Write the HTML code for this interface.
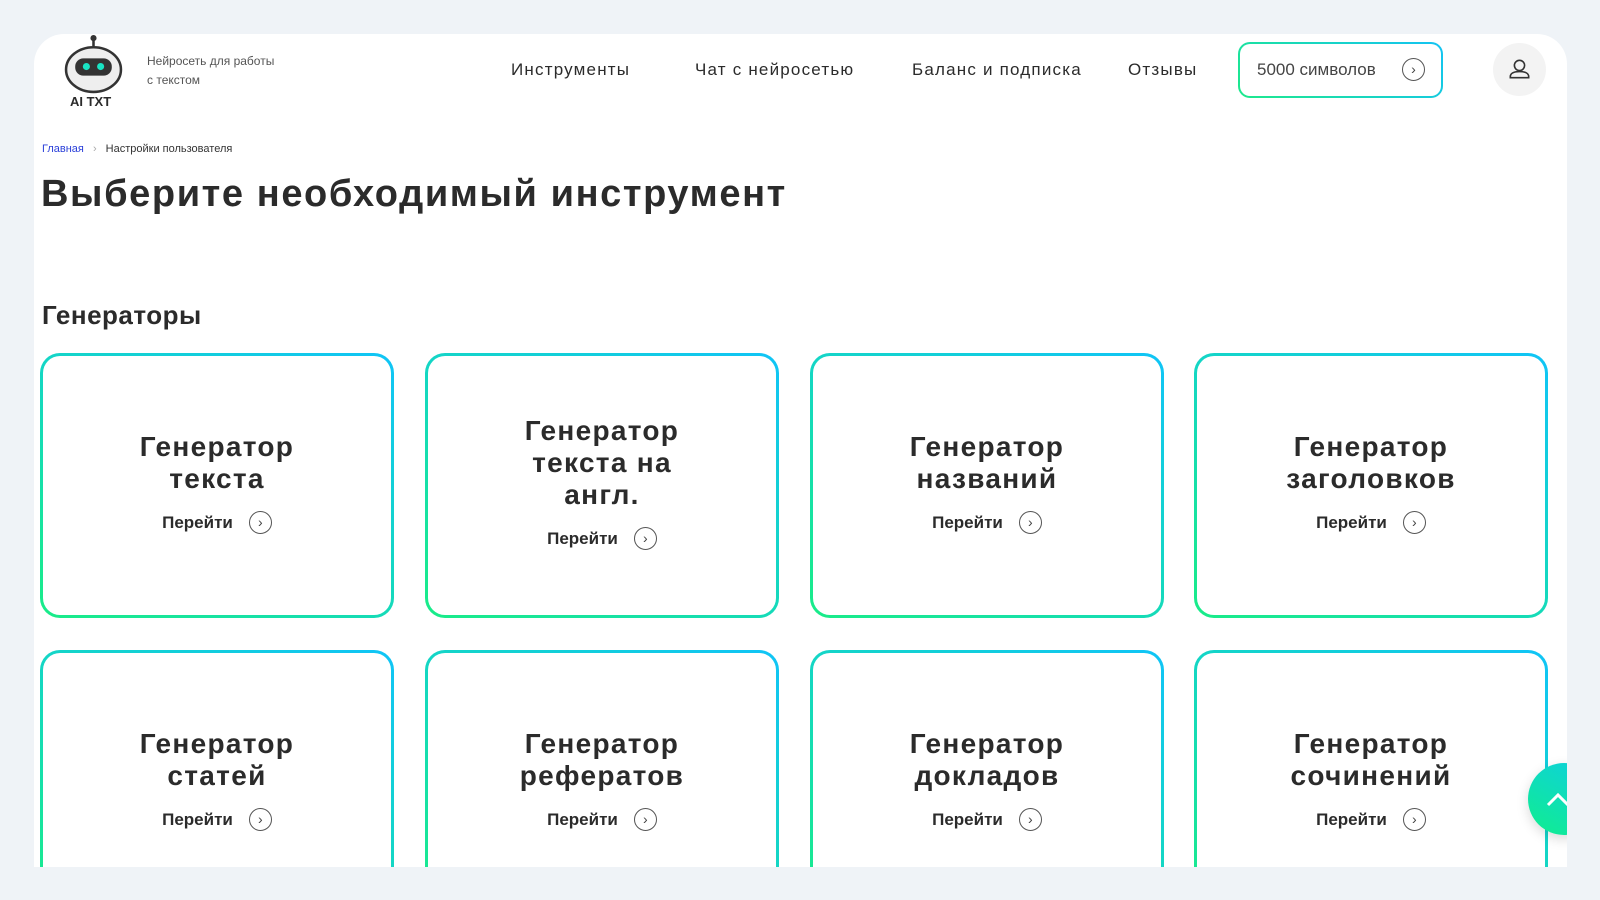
<!DOCTYPE html>
<html><head><meta charset="utf-8"><style>
*{box-sizing:border-box;margin:0;padding:0}
body{width:1600px;height:900px;background:#eff3f7;font-family:"Liberation Sans",sans-serif;color:#2b2b2b;overflow:hidden;position:relative}
.panel{position:absolute;left:34px;top:34px;width:1533px;height:833px;background:#fff;border-radius:30px 30px 0 0;overflow:hidden}
.nav a{position:absolute;top:60px;font-size:17px;letter-spacing:1.2px;color:#2b2b2b;text-decoration:none}
.btn{position:absolute;left:1238px;top:42px;width:205px;height:56px;border-radius:12px;border:2px solid transparent;background:linear-gradient(#fff,#fff) padding-box,linear-gradient(45deg,#1de98b,#13c3f4) border-box;font-size:17px;color:#444}
.circ{display:inline-block;width:23px;height:23px;border:1.5px solid #555;border-radius:50%;text-align:center;line-height:20px;font-size:14px;color:#444;font-weight:normal}
.card{position:absolute;width:354px;height:265px;border-radius:20px;border:3px solid transparent;background:linear-gradient(#fff,#fff) padding-box,linear-gradient(30deg,#19ec88,#10c4f7) border-box;text-align:center;display:flex;flex-direction:column;justify-content:center;align-items:center;padding-bottom:6px}
.card h3{font-size:28px;letter-spacing:1.3px;font-weight:bold;line-height:32px;color:#2b2b2b}
.card .go{margin-top:16px;font-size:17px;font-weight:bold;display:flex;align-items:center;gap:16px}
</style></head><body>
<div class="panel"></div>
<svg style="position:absolute;left:63px;top:34px" width="61" height="61" viewBox="0 0 60 60">
<line x1="30" y1="2" x2="30" y2="12" stroke="#333" stroke-width="2.5"/><circle cx="30" cy="4" r="3" fill="#333"/>
<ellipse cx="30" cy="35" rx="27" ry="22" fill="#eee" stroke="#333" stroke-width="2.5"/>
<rect x="12" y="24" width="36" height="17" rx="8" fill="#333"/>
<circle cx="23" cy="32" r="3.5" fill="#19e3c3"/><circle cx="37" cy="32" r="3.5" fill="#19e3c3"/></svg>
<div style="position:absolute;left:70px;top:94px;font-weight:bold;font-size:13px">AI TXT</div>
<div style="position:absolute;left:147px;top:52px;font-size:12px;color:#555;line-height:19px">Нейросеть для работы<br>с текстом</div>
<div class="nav"><a style="left:511px">Инструменты</a><a style="left:695px">Чат с нейросетью</a><a style="left:912px">Баланс и подписка</a><a style="left:1128px">Отзывы</a></div>
<div class="btn"><span style="position:absolute;left:17px;top:16px">5000 символов</span><span class="circ" style="position:absolute;left:162px;top:14px">›</span></div>
<div style="position:absolute;left:1493px;top:43px;width:53px;height:53px;border-radius:50%;background:#f3f3f3"><svg width="53" height="53" viewBox="0 0 52 52" fill="none" stroke="#333" stroke-width="1.6"><circle cx="26" cy="22" r="5"/><path d="M17 34v-1c0-3 3-5 9-5s9 2 9 5v1z"/></svg></div>
<div style="position:absolute;left:42px;top:143px;font-size:11px;color:#333"><span style="color:#2a3fd9">Главная</span> <span style="color:#aaa;margin:0 6px">›</span> Настройки пользователя</div>
<div style="position:absolute;left:41px;top:173px;font-size:38px;letter-spacing:1.6px;font-weight:bold;color:#2b2b2b">Выберите необходимый инструмент</div>
<div style="position:absolute;left:42px;top:300px;font-size:26px;letter-spacing:0.5px;font-weight:bold;color:#2b2b2b">Генераторы</div>
<div class="card" style="left:40px;top:353px"><h3>Генератор<br>текста</h3><div class="go">Перейти <span class="circ">›</span></div></div>
<div class="card" style="left:425px;top:353px"><h3>Генератор<br>текста на<br>англ.</h3><div class="go">Перейти <span class="circ">›</span></div></div>
<div class="card" style="left:810px;top:353px"><h3>Генератор<br>названий</h3><div class="go">Перейти <span class="circ">›</span></div></div>
<div class="card" style="left:1194px;top:353px"><h3>Генератор<br>заголовков</h3><div class="go">Перейти <span class="circ">›</span></div></div>
<div style="position:absolute;left:0;top:650px;width:1567px;height:217px;overflow:hidden">
<div class="card" style="left:40px;top:0"><h3>Генератор<br>статей</h3><div class="go">Перейти <span class="circ">›</span></div></div>
<div class="card" style="left:425px;top:0"><h3>Генератор<br>рефератов</h3><div class="go">Перейти <span class="circ">›</span></div></div>
<div class="card" style="left:810px;top:0"><h3>Генератор<br>докладов</h3><div class="go">Перейти <span class="circ">›</span></div></div>
<div class="card" style="left:1194px;top:0"><h3>Генератор<br>сочинений</h3><div class="go">Перейти <span class="circ">›</span></div></div>
<div style="position:absolute;left:1528px;top:113px;width:72px;height:72px;border-radius:50%;background:linear-gradient(30deg,#10ee8e,#0ecfe0);box-shadow:0 4px 12px rgba(0,0,0,.15)"><svg width="40" height="72" viewBox="0 0 40 72"><path d="M20 42l10-10l10 10" stroke="#fff" stroke-width="3" fill="none"/></svg></div>
</div>
</body></html>
